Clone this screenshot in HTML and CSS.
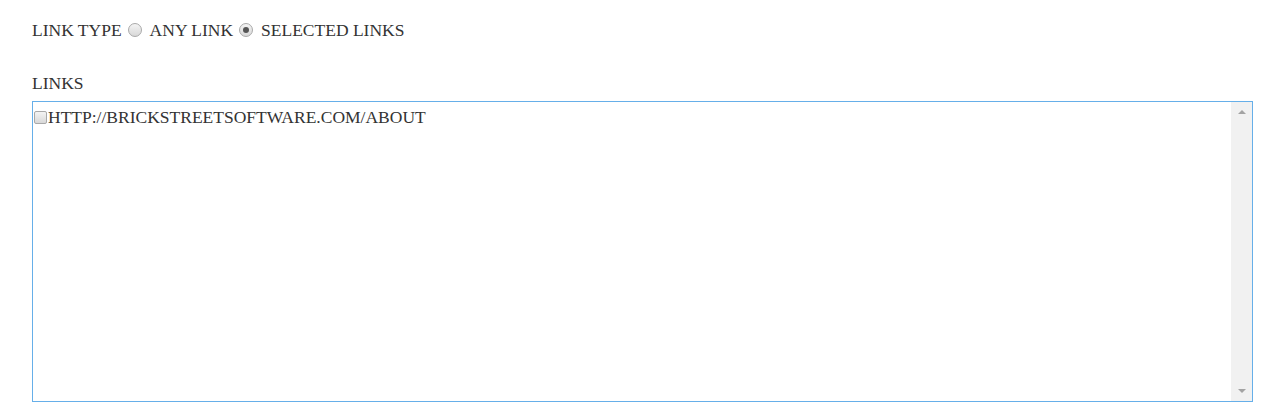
FILE: index.html
```html
<!DOCTYPE html>
<html>
<head>
<meta charset="utf-8">
<link rel="stylesheet" href="styles.css">
</head>
<body>
<div class="page">
  <div class="row-type">
    <span class="label">LINK TYPE</span>
    <label class="opt"><span class="radio"></span>ANY LINK</label>
    <label class="opt"><span class="radio checked"></span>SELECTED LINKS</label>
  </div>
  <div class="links-label">LINKS</div>
  <div class="listbox">
    <div class="list">
      <div class="item"><span class="check"></span>HTTP://BRICKSTREETSOFTWARE.COM/ABOUT</div>
    </div>
    <div class="scrollbar">
      <span class="arrow up"></span>
      <span class="arrow down"></span>
    </div>
  </div>
</div>
</body>
</html>
```
FILE: styles.css
```css
html, body { margin: 0; padding: 0; background: #fff; }
body {
  font-family: "Liberation Serif", "Times New Roman", serif;
  font-size: 17.5px;
  color: #333;
}
.page { padding: 20px 17px 0 32px; }
.row-type { display: flex; align-items: center; height: 20px; line-height: 20px; }
.label { margin-right: 6px; }
.opt { display: flex; align-items: center; margin-right: 6px; }
.radio {
  width: 14px; height: 14px; box-sizing: border-box;
  border-radius: 50%;
  border: 1px solid #a9a9a9;
  background: linear-gradient(#f4f4f4, #d8d8d8);
  margin-right: 8px;
  position: relative;
}
.radio.checked::after {
  content: ""; position: absolute; left: 3px; top: 3px;
  width: 6px; height: 6px; border-radius: 50%; background: #555;
}
.links-label { margin-top: 33px; line-height: 20px; height: 20px; }
.listbox {
  margin-top: 8px;
  height: 301px; box-sizing: border-box;
  border: 1px solid #66afe9;
  display: flex;
}
.list { flex: 1; }
.item { display: flex; align-items: center; line-height: 18px; margin-top: 6px; }
.check {
  width: 13px; height: 13px; box-sizing: border-box;
  border: 1px solid #a9a9a9; border-radius: 2px;
  background: linear-gradient(#f4f4f4, #d8d8d8);
  margin: 0 1px 0 1px;
}
.scrollbar {
  width: 21px; background: #f1f1f1;
  display: flex; flex-direction: column; justify-content: space-between; align-items: center;
  padding: 8px 0;
}
.arrow { width: 0; height: 0; border-left: 4px solid transparent; border-right: 4px solid transparent; }
.arrow.up { border-bottom: 4px solid #a3a3a3; }
.arrow.down { border-top: 4px solid #a3a3a3; }
```
